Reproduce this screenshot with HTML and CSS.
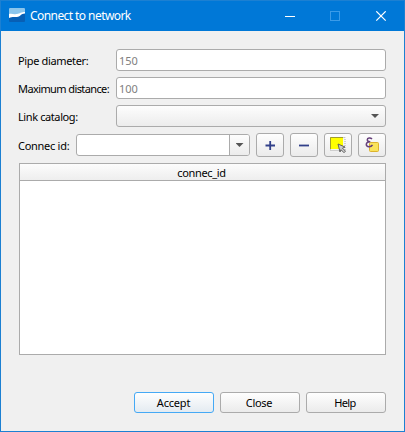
FILE: index.html
```html
<!DOCTYPE html>
<html lang="en">
<head>
<meta charset="utf-8">
<title>Connect to network</title>
<link rel="stylesheet" href="styles.css">
</head>
<body>
<div class="window">
  <header class="titlebar">
    <svg class="logo" width="16" height="16" viewBox="0 0 16 16"><rect width="16" height="14" rx="1" fill="#075fb5"/><path d="M1 0h14q1 0 1 1v4c-4-1-5 3-9 2S2 6 0 7V1q0-1 1-1z" fill="#8bc5ec"/><path d="M0 6c3-.5 5 .5 8 0s4-2 8-2v1.500c-4 0-5 3.500-8 3.500S3 8.500 0 10z" fill="#fff"/></svg>
    <span class="title">Connect to network</span>
    <svg class="controls" width="102" height="11" viewBox="0 0 102 11"><path d="M0 5.500h10" stroke="#fff"/><rect x="45.500" y=".5" width="9" height="9" fill="none" stroke="#3b9be8"/><path d="M91.300.3l9.400 9.400M100.700.3l-9.400 9.400" stroke="#fff" stroke-width="1.200"/></svg>
  </header>
  <main class="content">
    <div class="row"><label class="label"><span class="t-pipe">Pipe diameter:</span></label><div class="field">150</div></div>
    <div class="row"><label class="label"><span class="t-max">Maximum distance:</span></label><div class="field">100</div></div>
    <div class="row"><label class="label"><span class="t-link">Link catalog:</span></label><div class="select"><i class="arrow"></i></div></div>
    <div class="row tools">
      <label class="label short"><span class="t-conn">Connec id:</span></label>
      <div class="combo"><div class="drop"><i class="arrow"></i></div></div>
      <button class="tool"><svg width="16" height="16" viewBox="0 0 16 16"><path d="M3.500 8.500h9.500M8.200 4v9" stroke="#32408a" stroke-width="1.800"/></svg></button>
      <button class="tool"><svg width="16" height="16" viewBox="0 0 16 16"><path d="M3 8.500h10" stroke="#32408a" stroke-width="1.800"/></svg></button>
      <button class="tool"><svg width="16" height="16" viewBox="0 0 16 16"><rect x=".5" y=".5" width="14.500" height="13" fill="#f4f4f4" stroke="#aaa" stroke-dasharray="1 1"/><path d="M0 0h13v12H0z" fill="#ff0"/><path d="M.5 12V.5H13" fill="none" stroke="#a09c30"/><path d="M8 7l7 3-2.500 1.200 3 3-1.500 1.500-3-3L10 15z" fill="#ccc" stroke="#555" stroke-width=".9"/></svg></button>
      <button class="tool"><svg width="16" height="16" viewBox="0 0 16 16"><rect x="5.500" y="5.500" width="9" height="9" rx="1" fill="#fae35b" stroke="#dcb32d"/><path d="M8 2C6.500.3 3.300.6 3.300 2.800c0 1.300 1 2 3 2C3.800 4.800 2.300 5.800 2.300 7.600c0 2.700 4.700 2.900 6.200.3" fill="none" stroke="#66407b" stroke-width="1.500"/></svg></button>
    </div>
    <section class="table"><div class="table-head"><span class="t-head">connec_id</span></div></section>
    <footer class="actions">
      <button class="action primary"><span class="t-accept">Accept</span></button>
      <button class="action"><span class="t-close">Close</span></button>
      <button class="action"><span class="t-help">Help</span></button>
    </footer>
  </main>
</div>
</body>
</html>
```
FILE: styles.css
```css
* { box-sizing: border-box; }
body { margin: 0; font: 11px/14px "Noto Sans", "Liberation Sans", sans-serif; color: #000; }
button { font: inherit; color: inherit; padding: 0; margin: 0; }
svg { display: block; flex: none; }
.window { width: 405px; height: 432px; display: flex; flex-direction: column; background: #f0f0f0; border: 1px solid #1c80d2; }
.titlebar { height: 30px; flex: none; display: flex; align-items: center; background: #0078d7; color: #fff; padding: 0 17px 0 8px; }
.title { margin-left: 5px; font-size: 12px; line-height: 16px; letter-spacing: -.57px; white-space: nowrap; }
.controls { margin-left: auto; }
.content { flex: 1; display: flex; flex-direction: column; gap: 6px; padding: 18px; }
.row { display: flex; height: 22px; align-items: center; }
.label { width: 97px; height: 22px; padding: 5px 0 0; line-height: 14px; white-space: nowrap; text-indent: -1px; }
.label.short { width: 51px; flex: none; }
.t-pipe { letter-spacing: -.35px; }
.t-max { letter-spacing: -.6px; }
.t-link { letter-spacing: -.4px; }
.t-conn { letter-spacing: -.28px; }
.t-head { letter-spacing: -.35px; margin-right: 2px; }
.t-accept { letter-spacing: -.2px; margin-right: 1px; }
.t-close { letter-spacing: -.3px; margin-right: 2px; }
.t-help { letter-spacing: -.6px; margin-right: 2px; }
.field, .select, .combo { height: 22px; border: 1px solid #ababab; border-radius: 3px; background: #fff; }
.field, .select { width: 270px; }
.field { padding: 4px 2px; color: #808080; line-height: 14px; letter-spacing: -.1px; }
.select { display: flex; align-items: center; justify-content: flex-end; padding-right: 6px; background: linear-gradient(#fdfdfd, #ececec); }
.arrow { width: 8px; height: 4px; background: #555; clip-path: polygon(0 0, 100% 0, 50% 100%); }
.tools { height: 24px; gap: 6px; }
.combo { width: 174px; flex: none; display: flex; justify-content: flex-end; overflow: hidden; }
.drop { width: 20px; display: flex; align-items: center; justify-content: center; border-left: 1px solid #ababab; background: linear-gradient(#fdfdfd, #ececec); }
.tool, .action { border: 1px solid #ababab; border-radius: 3px; background: linear-gradient(#fefefe, #ebebeb); }
.tool { width: 28px; height: 24px; flex: none; display: flex; align-items: center; justify-content: center; }
.table { height: 192px; width: 367px; background: #fff; border: 1px solid #ababab; }
.table-head { height: 17px; border-bottom: 1px solid #ababab; background: linear-gradient(#fcfcfc, #eee); text-align: center; line-height: 17px; }
.actions { margin-top: auto; display: flex; justify-content: flex-end; gap: 6px; }
.action { width: 80px; height: 21px; line-height: 19px; }
.primary { border-color: #45a9f5; background: linear-gradient(#fefefe, #e4ebf1); }
```
